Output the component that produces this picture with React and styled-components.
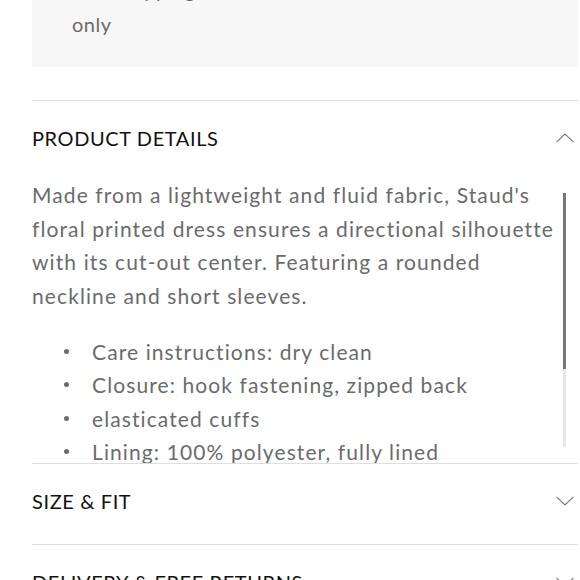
import React, { useEffect, useRef, useState } from 'react'
import styled, { createGlobalStyle } from 'styled-components'

const GlobalStyle = createGlobalStyle`
  html, body { margin: 0; padding: 0; background: #fff; }
  body { font-family: "Lato", "Noto Sans", sans-serif; overflow: hidden; }
`

const Page = styled.div`
  margin-top: -51px;
  padding: 0 2px 0 32px;
  width: 580px;
  box-sizing: border-box;
`

const Notice = styled.div`
  background: #f7f7f7;
  padding: 24px 40px 26px;
  color: #6b6b6b;
  font-size: 20px;
  line-height: 34px;
  letter-spacing: 0.5px;
  margin-bottom: 33px;
`

const Section = styled.div`
  border-top: 1px solid #dedede;
`

const Header = styled.button`
  all: unset;
  box-sizing: border-box;
  width: 100%;
  display: flex;
  align-items: center;
  justify-content: space-between;
  padding: 25px 4px ${(p) => (p.$open ? '28px' : '31px')} 0;
  cursor: pointer;
`

const Title = styled.span`
  font-size: 20px;
  line-height: 24px;
  color: #111;
  letter-spacing: 0.6px;
  text-transform: uppercase;
`

const Chevron = styled.svg`
  width: 18px;
  height: 10px;
  transform: ${(p) => (p.$open ? 'rotate(180deg)' : 'none')};
`

const PanelWrap = styled.div`
  position: relative;
  margin-right: 12px;
`

const Panel = styled.div`
  height: 285px;
  overflow-y: scroll;
  scrollbar-width: none;
  color: #6b6b6b;
  font-size: 21px;
  letter-spacing: 1.1px;

  &::-webkit-scrollbar { display: none; }
`

const Track = styled.div`
  position: absolute;
  right: 0;
  top: 15px;
  bottom: 16px;
  width: 3px;
  background: #e6e6e6;
`

const Thumb = styled.div`
  width: 100%;
  background: #777;
`

const Text = styled.p`
  margin: 0 0 23px;
  line-height: 33.5px;
`

const List = styled.ul`
  list-style: none;
  margin: 0;
  padding: 0 0 22px;
`

const Item = styled.li`
  display: flex;
  align-items: center;
  line-height: 33.3px;
  padding-left: 32px;

  &::before {
    content: '';
    width: 5px;
    height: 5px;
    border-radius: 50%;
    background: #6b6b6b;
    margin-right: 23px;
    flex: none;
  }
`

const details = [
  'Care instructions: dry clean',
  'Closure: hook fastening, zipped back',
  'elasticated cuffs',
  'Lining: 100% polyester, fully lined',
  'Composition: 100% polyester',
  'Length: midi',
  'Fit: true to size',
]

function Arrow({ open }) {
  return (
    <Chevron $open={open} viewBox="0 0 18 10" fill="none">
      <polyline points="0.5,0.8 9,9 17.5,0.8" stroke="#777" strokeWidth="1.1" />
    </Chevron>
  )
}

function ScrollPanel({ children }) {
  const ref = useRef(null)
  const trackRef = useRef(null)
  const [bar, setBar] = useState({ size: 0.685, pos: 0 })

  const update = () => {
    const el = ref.current
    if (!el) return
    const size = el.clientHeight / el.scrollHeight
    const max = el.scrollHeight - el.clientHeight
    const pos = max > 0 ? el.scrollTop / max : 0
    setBar({ size: Math.min(size, 1), pos })
  }

  useEffect(() => {
    update()
  }, [])

  const trackH = trackRef.current ? trackRef.current.clientHeight : 254
  const thumbH = bar.size * trackH

  return (
    <PanelWrap>
      <Panel ref={ref} onScroll={update}>
        {children}
      </Panel>
      <Track ref={trackRef}>
        <Thumb style={{ height: thumbH, marginTop: bar.pos * (trackH - thumbH) }} />
      </Track>
    </PanelWrap>
  )
}

export default function App() {
  const [open, setOpen] = useState('details')
  const toggle = (id) => setOpen(open === id ? null : id)

  return (
    <Page>
      <GlobalStyle />
      <Notice>
        Free shipping and returns on UK orders
        <br />
        only
      </Notice>

      <Section>
        <Header $open={open === 'details'} onClick={() => toggle('details')}>
          <Title>Product Details</Title>
          <Arrow open={open === 'details'} />
        </Header>
        {open === 'details' && (
          <ScrollPanel>
            <Text>
              Made from a lightweight and fluid fabric, Staud's floral printed dress ensures a
              directional silhouette with its cut-out center. Featuring a rounded neckline and
              short sleeves.
            </Text>
            <List>
              {details.map((d) => (
                <Item key={d}>{d}</Item>
              ))}
            </List>
          </ScrollPanel>
        )}
      </Section>

      <Section>
        <Header $open={open === 'size'} onClick={() => toggle('size')}>
          <Title>Size &amp; Fit</Title>
          <Arrow open={open === 'size'} />
        </Header>
      </Section>

      <Section>
        <Header $open={open === 'delivery'} onClick={() => toggle('delivery')}>
          <Title>Delivery &amp; Free Returns</Title>
          <Arrow open={open === 'delivery'} />
        </Header>
      </Section>
    </Page>
  )
}
